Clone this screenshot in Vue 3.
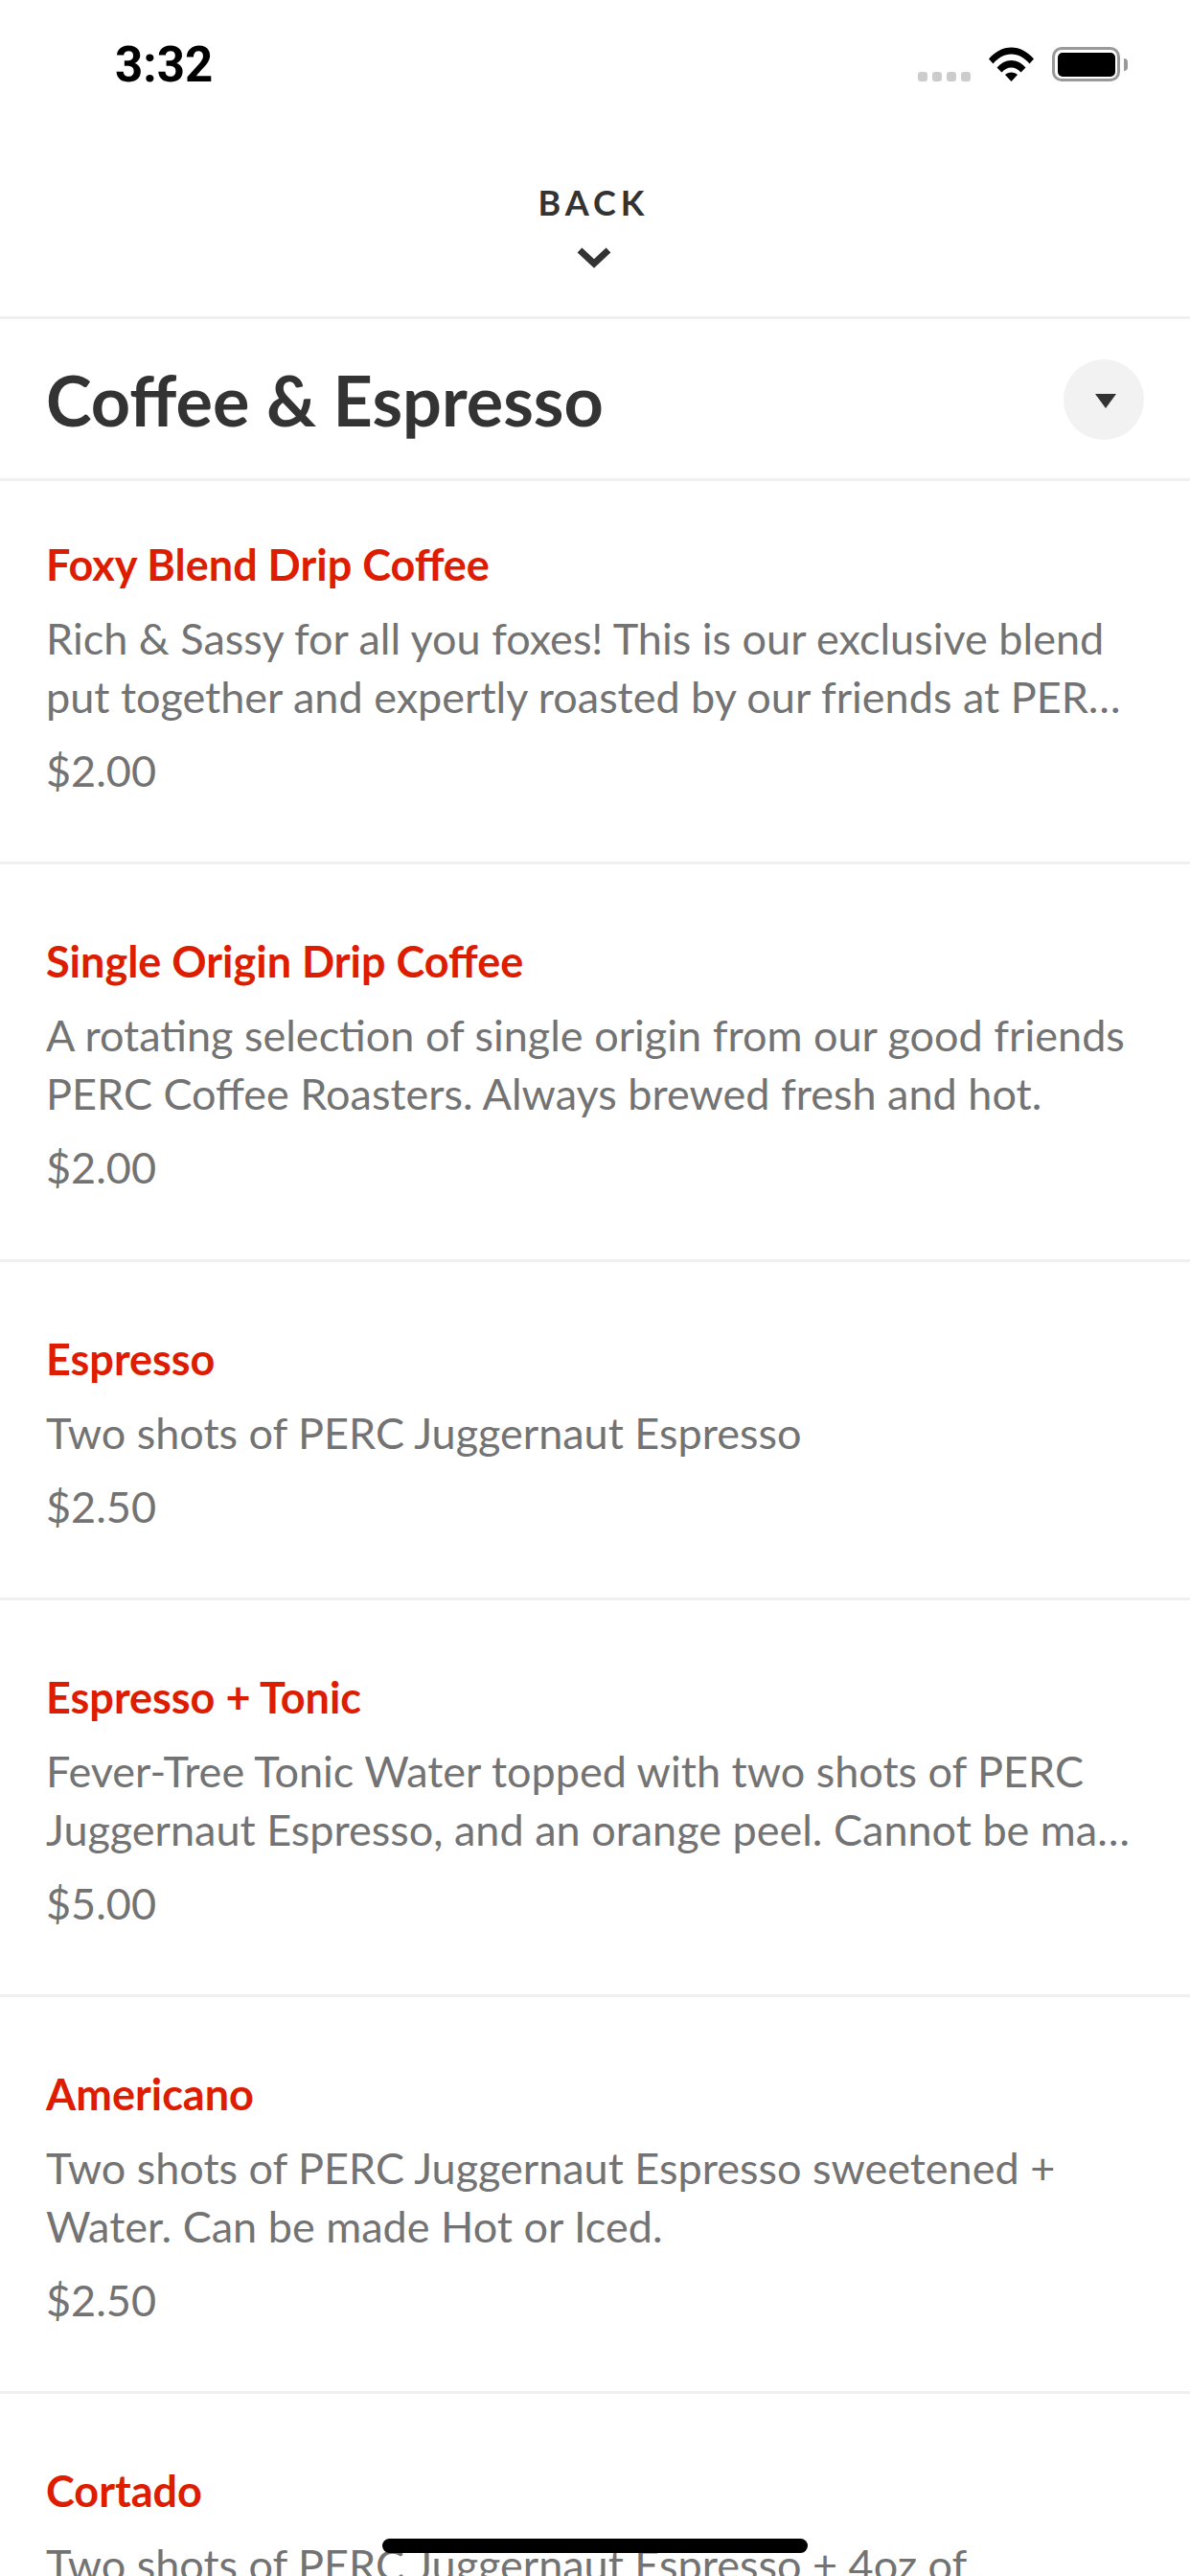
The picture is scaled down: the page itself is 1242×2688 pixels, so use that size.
<template>
  <div class="page">
    <!-- Status bar -->
    <div class="status-bar">
      <span class="time">3:32</span>
      <div class="status-icons">
        <div class="signal">
          <span v-for="n in 4" :key="n" class="dot"></span>
        </div>
        <svg class="wifi" viewBox="0 0 47 36" width="47" height="36">
          <path d="M0 12.5C6.5 5 14.5 0.5 23.5 0.5S40.500 5 47 12.500L42.500 17.500C37.500 11.500 31 7.500 23.500 7.500S9.500 11.500 4.500 17.500Z" fill="#000"/>
          <path d="M8.500 21.500C12.500 17 17.500 14 23.500 14S34.500 17 38.500 21.500L33.500 26.500C31 23.500 27.500 21.500 23.500 21.500S16 23.500 13.500 26.500Z" fill="#000"/>
          <path d="M17 29C18.500 27.500 21 26.500 23.500 26.500S28.500 27.500 30 29L23.500 36Z" fill="#000"/>
        </svg>
        <div class="battery">
          <div class="battery-body"><div class="battery-fill"></div></div>
          <div class="battery-nub"></div>
        </div>
      </div>
    </div>

    <!-- Back -->
    <div class="back-bar">
      <span class="back-label">BACK</span>
      <svg class="back-chevron" viewBox="0 0 36 24" width="36" height="24">
        <polyline points="3,4 18,18 33,4" fill="none" stroke="#333" stroke-width="7"/>
      </svg>
    </div>

    <!-- Section title -->
    <div class="section-head">
      <h1 class="section-title">Coffee &amp; Espresso</h1>
      <div class="section-toggle">
        <svg viewBox="0 0 22 16" width="22" height="16"><polygon points="0,0 22,0 11,15" fill="#333"/></svg>
      </div>
    </div>

    <!-- Items -->
    <div class="menu-list">
      <div v-for="item in items" :key="item.name" class="menu-item">
        <div class="item-name">{{ item.name }}</div>
        <div class="item-desc">{{ item.desc }}</div>
        <div class="item-price">{{ item.price }}</div>
      </div>
    </div>

    <div class="home-indicator"></div>
  </div>
</template>

<script setup>
// descriptions are already cut the way the app shows them (two lines max)
const items = [
  {
    name: 'Foxy Blend Drip Coffee',
    desc: 'Rich & Sassy for all you foxes! This is our exclusive blend put together and expertly roasted by our friends at PER…',
    price: '$2.00',
  },
  {
    name: 'Single Origin Drip Coffee',
    desc: 'A rotating selection of single origin from our good friends PERC Coffee Roasters. Always brewed fresh and hot.',
    price: '$2.00',
  },
  {
    name: 'Espresso',
    desc: 'Two shots of PERC Juggernaut Espresso',
    price: '$2.50',
  },
  {
    name: 'Espresso + Tonic',
    desc: 'Fever-Tree Tonic Water topped with two shots of PERC Juggernaut Espresso, and an orange peel. Cannot be ma…',
    price: '$5.00',
  },
  {
    name: 'Americano',
    desc: 'Two shots of PERC Juggernaut Espresso sweetened + Water. Can be made Hot or Iced.',
    price: '$2.50',
  },
  {
    name: 'Cortado',
    desc: 'Two shots of PERC Juggernaut Espresso + 4oz of steamed milk.',
    price: '$3.50',
  },
]
</script>

<style>
html, body { margin: 0; background: #fff; }
</style>

<style scoped>
.page {
  position: relative;
  width: 1242px; height: 2688px;
  overflow: hidden;
  background: #fff;
  font-family: Lato, "Liberation Sans", sans-serif;
}

/* Status bar */
.status-bar {
  display: flex; align-items: center; justify-content: space-between;
  height: 134px;
  padding: 0 65px 0 120px;
  box-sizing: border-box;
}
.time {
  font-family: Roboto, "Liberation Sans", sans-serif;
  font-size: 51px; font-weight: 700; color: #000;
  line-height: 60px;
  padding-top: 2px;
}
.status-icons { display: flex; align-items: flex-end; height: 36px; }
.signal { display: flex; gap: 5px; margin-right: 19px; }
.dot { width: 10px; height: 10px; border-radius: 3px; background: #ccc; }
.wifi { display: block; margin-right: 19px; }
.battery { display: flex; align-items: center; }
.battery-body {
  width: 71px; height: 36px;
  box-sizing: border-box;
  border: 3px solid #999;
  border-radius: 10px;
  padding: 2.5px;
}
.battery-fill { width: 100%; height: 100%; background: #000; border-radius: 5px; }
.battery-nub { width: 4px; height: 13px; margin-left: 4px; background: #999; border-radius: 0 4px 4px 0; }

/* Back */
.back-bar {
  display: flex; flex-direction: column; align-items: center;
  height: 199px;
  padding: 55px 3px 0 0;
  box-sizing: border-box;
  border-bottom: 3px solid #f0f0f0;
}
.back-label {
  font-size: 36px; font-weight: 700; color: #333;
  letter-spacing: 5px; line-height: 44px;
}
.back-chevron { display: block; margin-top: 24px; }

/* Section head */
.section-head {
  display: flex; align-items: center; justify-content: space-between;
  height: 169px;
  padding: 2px 48px 0;
  box-sizing: border-box;
  border-bottom: 3px solid #f0f0f0;
}
.section-title { margin: 0; font-size: 72px; font-weight: 700; color: #333; line-height: 84px; }
.section-toggle {
  display: flex; align-items: center; justify-content: center;
  width: 84px; height: 84px;
  box-sizing: border-box;
  padding: 3px 0 0 3px;
  border-radius: 50%;
  background: #f2f2f2;
}

/* Items */
.menu-item {
  padding: 71px 60px 64.25px 48px;
  border-bottom: 3px solid #f0f0f0;
}
.menu-item:first-child { padding-top: 57px; }
.item-name { font-size: 45px; font-weight: 700; color: #dd1c00; line-height: 61px; }
.item-desc { margin-top: 16px; font-size: 45px; color: #737373; line-height: 61px; }
.item-price { margin-top: 16px; font-size: 45px; color: #737373; line-height: 61px; }

.home-indicator {
  position: absolute; left: 399px; top: 2649px;
  width: 444px; height: 15px;
  border-radius: 8px;
  background: #000;
}
</style>
